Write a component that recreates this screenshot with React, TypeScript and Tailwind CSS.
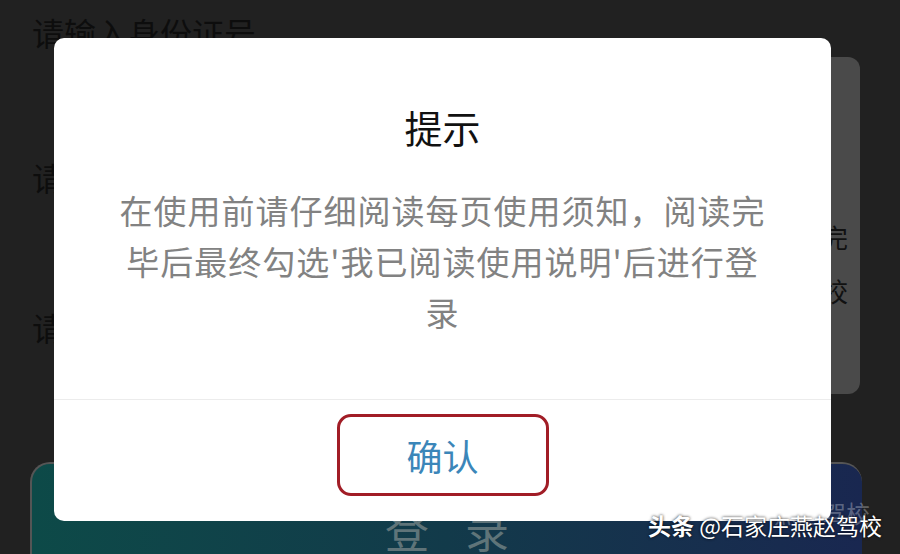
import React from "react";

const font = { fontFamily: '"Noto Sans CJK SC", "Noto Sans", sans-serif' };

const App = () => {
  return (
    <div className="relative w-[900px] h-[554px] overflow-hidden bg-[#212121]" style={font}>
      {/* 背景のフォーム */}
      <div className="flex flex-col h-full">
        <div className="pl-[32px] pt-[12px] text-[32px] leading-[40px] text-[#0d0d0d]">请输入身份证号</div>
        <div className="flex mt-[5px] h-[341px]">
          <div className="flex flex-col w-[180px] pl-[32px]">
            <div className="mt-[100px] text-[32px] leading-[40px] text-[#0d0d0d]">请</div>
            <div className="mt-[110px] text-[32px] leading-[40px] text-[#0d0d0d]">请</div>
          </div>
          <div className="flex-1 mr-[40px] rounded-[12px] bg-[#4a4a4a] flex flex-col items-end pr-[12px]">
            <div className="mt-[163px] text-[26px] leading-[34px] text-[#111]">完</div>
            <div className="mt-[20px] text-[26px] leading-[34px] text-[#111]">校</div>
          </div>
        </div>
        <div className="mt-[68px] ml-[30px] mr-[38px] flex-1 rounded-t-[20px] border-t-[2px] border-l-[2px] border-[#555] bg-gradient-to-r from-[#0d4a48] via-[#123a4a] to-[#192750] flex justify-center gap-[36px] pt-[40px]">
          <span className="text-[44px] leading-[50px] text-[#5f7479]">登</span>
          <span className="text-[44px] leading-[50px] text-[#5f7479]">录</span>
        </div>
      </div>

      {/* ダイアログ */}
      <div className="absolute left-[54px] top-[38px] w-[777px] h-[483px] rounded-[10px] bg-white flex flex-col">
        <div className="h-[362px] flex flex-col items-center border-b border-[#ececec]">
          <div className="mt-[62px] text-[38px] leading-[54px] text-[#111]">提示</div>
          <div className="mt-[31px] text-[33px] leading-[51px] text-[#828282] text-center tracking-[1px]">
            在使用前请仔细阅读每页使用须知，阅读完
            <br />
            毕后最终勾选'我已阅读使用说明'后进行登
            <br />
            录
          </div>
        </div>
        <div className="flex justify-center">
          <button className="mt-[14px] w-[212px] h-[82px] rounded-[14px] border-[3px] border-[#a11d26] bg-white flex items-center justify-center text-[36px] text-[#3b86b9]">
            确认
          </button>
        </div>
      </div>

      {/* ウォーターマーク */}
      <div className="absolute right-[30px] top-[500px] flex items-center gap-[6px] text-[24px] leading-[26px] text-white/30">
        <svg width="26" height="22" viewBox="0 0 26 22" fill="none" stroke="currentColor" strokeWidth="1.5">
          <ellipse cx="10" cy="9" rx="9" ry="7.5" />
          <ellipse cx="18" cy="14" rx="7" ry="6" />
        </svg>
        <span>燕赵驾校</span>
      </div>
      <div className="absolute right-[18px] top-[510px] text-[23px] leading-[30px] text-white [text-shadow:0_0_3px_rgba(0,0,0,0.9)]">
        <span className="font-bold">头条</span> @石家庄燕赵驾校
      </div>
    </div>
  );
};

export default App;
